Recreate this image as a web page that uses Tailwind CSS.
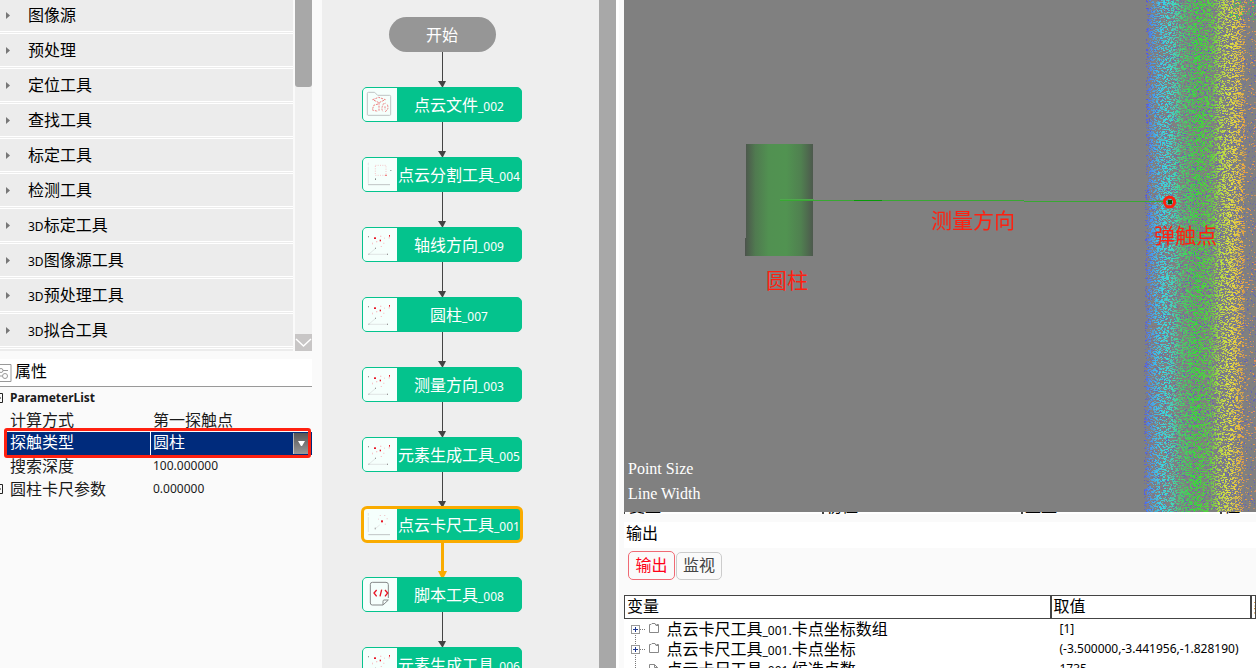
<!DOCTYPE html>
<html lang="zh-CN">
<head>
<meta charset="utf-8">
<title>点云测量</title>
<script src="https://cdn.jsdelivr.net/npm/@tailwindcss/browser@4"></script>
</head>
<body class="bg-[#fafafa] text-black font-['Noto_Sans','Noto_Sans_CJK_SC',sans-serif] text-base">
<svg class="hidden">
  <symbol id="cloud" viewBox="0 0 105 105">
    <path d="M20 82 41 64M22 82H78" stroke="#d5dada" stroke-width="2" fill="none"/>
    <g fill="#999"><rect x="18" y="27" width="3" height="4"/><rect x="39" y="62" width="3" height="4"/><rect x="75" y="80" width="3" height="4"/><rect x="19" y="80" width="3" height="3"/></g>
    <g fill="#f8c6ca"><rect x="54" y="26" width="4" height="4"/><rect x="66" y="32" width="3" height="3"/><rect x="42" y="42" width="4" height="4"/><rect x="30" y="47" width="3" height="5"/><rect x="64" y="47" width="3" height="4"/><rect x="56" y="57" width="4" height="3"/><rect x="80" y="30" width="3" height="5"/></g>
    <g fill="#e81626"><rect x="36" y="31" width="6" height="5"/><rect x="53" y="38" width="4" height="5"/><rect x="81" y="24" width="3" height="5"/></g>
  </symbol>
  <symbol id="file" viewBox="0 0 105 105">
    <path d="M16 85V19q0-3 3-3h19l9 9h36q3 0 3 3v54q0 3-3 3H18" fill="none" stroke="#bfc4c4" stroke-width="3"/>
    <g fill="none" stroke="#ee7f80" stroke-width="3" stroke-dasharray="6 3"><path d="M32 38l18-7 20 7-19 9zM51 47v25M48 51l-13 4-4 14 17 4"/><path d="M62 52l10-4M76 53q6 14-7 21M62 56q-5 10 1 18M69 58v10"/></g>
  </symbol>
  <symbol id="split" viewBox="0 0 105 105">
    <path d="M19 17v8M19 29v51" stroke="#d5dada" stroke-width="2"/><path d="M18 83H84" stroke="#bfc4c4" stroke-width="3"/>
    <path d="M40 25H72V55H40z" fill="none" stroke="#f5c6c9" stroke-width="3" stroke-dasharray="3 4"/>
    <g fill="#888"><rect x="39" y="64" width="3" height="5"/><rect x="85" y="39" width="3" height="3"/></g><path d="M69 55h6" stroke="#e88" stroke-width="4"/>
  </symbol>
  <symbol id="caliper" viewBox="0 0 105 105">
    <path d="M19 18v8M19 30v45" stroke="#d5dada" stroke-width="2"/><path d="M19 83H84" stroke="#bfc4c4" stroke-width="3"/>
    <rect x="57" y="40" width="6" height="6" fill="#e81626"/>
    <g fill="#f0cdd0"><rect x="53" y="24" width="4" height="3"/><rect x="66" y="24" width="4" height="3"/><rect x="74" y="33" width="3" height="4"/><rect x="48" y="35" width="3" height="3"/><rect x="68" y="50" width="4" height="3"/></g><rect x="38" y="62" width="4" height="5" fill="#aaa"/><path d="m41 64 12-10" stroke="#ddd" stroke-width="2"/>
  </symbol>
  <symbol id="script" viewBox="0 0 105 105">
    <path d="M79 63V23q0-7-7-7H31q-6 0-6 6v56q0 6 6 6h32l16-15H66q-3 0-3 4v11" fill="none" stroke="#858989" stroke-width="3"/>
    <path d="m44 39-8 9 8 10M69 39l8 9-8 10M59 38l-5 20" fill="none" stroke="#e81626" stroke-width="4"/>
  </symbol>
  <symbol id="arrow" viewBox="0 0 10 35"><path d="M5.500 0V30" stroke="#444" stroke-width="1"/><path d="M1 29H9L6 35H5z" fill="#444"/></symbol>
</svg>

<div class="flex h-screen overflow-hidden">
  <aside class="flex w-[312px] shrink-0 flex-col">
    <div class="flex h-[351px] overflow-hidden bg-[#fafafa]">
      <ul id="tools" class="-mt-px w-[293px] bg-[#ececec]"></ul>
      <div class="ml-[2px] flex w-[17px] flex-col justify-between bg-[#f0f0f0]">
        <div class="h-[87px] rounded-b-[3px] bg-[#a8a8a8]"></div>
        <button aria-label="向下滚动" class="flex h-[17px] w-[17px] items-center justify-center bg-[#c8c6c6]"><svg class="h-[17px] w-[17px]" viewBox="0 0 17 17"><path d="m1 5 7.500 7L16 5" fill="none" stroke="#fff" stroke-width="1.500"/></svg></button>
      </div>
    </div>
    <h2 class="mt-2 flex h-7 items-center gap-[3px] border-b border-[#999] bg-white">
      <svg class="h-5 w-3 shrink-0" viewBox="0 0 12 20"><path d="M0 1.500H11V18.500H0M0 7.500H8M0 13H2" fill="none" stroke="#999"/><circle cx="1" cy="7.500" r="2" fill="#fff" stroke="#999"/><circle cx="5" cy="13" r="2.500" fill="none" stroke="#999"/></svg>
      <span class="pb-1 leading-5">属性</span></h2>
    <div class="text-[#1a1a1a]">
      <div class="flex h-[22px] items-center"><svg class="mr-[7px] h-3 w-[3px]" viewBox="0 0 3 12"><path d="M0 1.500H2.500V10.500H0M0 6H1" fill="none" stroke="#222"/></svg><b class="text-xs">ParameterList</b></div>
      <div class="flex h-[23px] items-center pb-[2px] pl-[10px]"><span class="w-[143px]">计算方式</span><span>第一探触点</span></div>
      <div class="relative flex h-[23px] items-center bg-[#002b7c] pl-[10px] text-white">
        <label for="probe" class="flex h-full w-[141px] items-center border-r border-white pb-[3px]">探触类型</label>
        <select id="probe" class="h-full flex-1 appearance-none pb-[3px] pl-[2px] leading-5 outline-none"><option>圆柱</option></select>
        <span class="pointer-events-none absolute right-1 flex h-[21px] w-[15px] items-center justify-center border-l border-white/50 bg-linear-to-b from-[#555] to-[#999]"><svg class="h-[5px] w-[7px]" viewBox="0 0 7 5"><path d="M0 0H7L4 5H3z" fill="#fff"/></svg></span>
        <span class="pointer-events-none absolute -top-[4px] -bottom-[4px] left-0 w-1 bg-[#fafafa]"></span>
        <span class="pointer-events-none absolute -top-[4px] right-[1px] -bottom-[3px] left-1 rounded-[3px] border-[3px] border-[#ff2010]"></span>
      </div>
      <div class="flex h-[23px] items-center pb-[2px] pl-[10px]"><span class="w-[143px]">搜索深度</span><span class="pt-px text-xs">100.000000</span></div>
      <div class="flex h-[23px] items-center pb-[2px]"><svg class="mr-[7px] h-3 w-[3px]" viewBox="0 0 3 12"><path d="M0 1.500H2.500V10.500H0M0 6H1" fill="none" stroke="#222"/></svg><span class="w-[143px]">圆柱卡尺参数</span><span class="pt-px text-xs">0.000000</span></div>
    </div>
  </aside>

  <main class="ml-[3px] flex w-[304px] shrink-0 border-l-[7px] border-[#fafafa] bg-[#eee]">
    <section class="flex-1 overflow-hidden pt-[17px] pl-10">
      <div id="flow" class="flex w-40 flex-col items-center">
        <div class="flex h-[35px] w-[107px] shrink-0 items-center justify-center rounded-full bg-[#969696] text-white">开始</div>
      </div>
    </section>
    <div class="w-[17px] bg-[#a8a8a8]"></div>
    <div class="w-[3px] bg-white"></div>
  </main>

  <section class="ml-[5px] flex min-w-0 flex-1 flex-col">
    <div class="relative flex-1 overflow-hidden bg-[#808080]">
      <div class="absolute top-[144px] left-[122px] h-[112px] w-[67px] bg-[linear-gradient(to_right,#4c584c,#507a50_14%,#519151_34%,#519351_60%,#508050_82%,#4d594d)]"></div>
      <div class="absolute top-[238px] left-[121px] h-[18px] w-px bg-[#4c544c]"></div>
      <canvas id="points" width="114" height="512" class="absolute top-0 right-0"></canvas>
      <svg class="absolute top-[190px] left-0 h-6 w-[560px]" viewBox="0 0 560 24"><path d="M156 9.500H190" stroke="#4fa84c"/><path d="M156 10.500H400M400 11.500H542" fill="none" stroke="#38a832" stroke-width="1"/><path d="M230 10.500h28" stroke="#079a07"/><circle cx="545.500" cy="12" r="5" fill="none" stroke="#ff2010" stroke-width="3"/><path d="M544 10h4v4h-4z" fill="#0a5a10"/></svg>
      <span class="absolute top-[266px] left-[142px] text-[21px] leading-7 text-[#ff2010]">圆柱</span>
      <span class="absolute top-[206px] left-[307px] text-[21px] leading-7 text-[#ff2010]">测量方向</span>
      <span class="absolute top-[221px] left-[530px] text-[21px] leading-7 text-[#ff2010]">弹触点</span>
      <div class="absolute bottom-[6px] left-1 font-['Liberation_Serif',serif] text-base leading-[25px] text-white"><p>Point Size</p><p>Line Width</p></div>
    </div>
    <div class="flex h-[156px] flex-col">
      <div class="flex h-[2px] items-end overflow-hidden bg-white leading-4"><span class="w-[199px] border-l border-[#444] pl-1">变量</span><span class="w-[200px] border-l-2 border-[#444] pl-[2px]">初值</span><span class="w-[200px] border-l-2 border-[#444] pl-[2px]">重量</span><span class="border-l-2 border-[#444] pl-[2px]">初值</span></div>
      <h2 class="mt-2 h-[26px] bg-white pl-[2px] leading-[23px]">输出</h2>
      <div class="flex h-[47px] items-start gap-px pt-[3px] pl-1">
        <button class="h-[29px] w-[47px] rounded-[5px] border border-[#f06a74] pb-[2px] leading-6 text-[#ff0018]">输出</button>
        <button class="mt-px h-7 w-[46px] rounded-[5px] border border-[#ccc] pb-[2px] leading-6 text-[#444]">监视</button>
      </div>
      <div class="flex-1 overflow-hidden bg-white">
        <table class="w-full table-fixed border-collapse text-left">
          <colgroup><col><col class="w-[200px]"><col class="w-[5px]"></colgroup>
          <thead><tr class="h-[22px] border border-[#444] leading-5"><th class="border-r-2 border-[#444] p-0 pb-[2px] pl-[2px] font-normal leading-5">变量</th><th class="border-r-2 border-[#444] p-0 pb-[2px] pl-[2px] font-normal leading-5">取值</th><th class="overflow-hidden p-0 pb-[2px] pl-[2px] font-normal leading-5 whitespace-nowrap">类型</th></tr></thead>
          <tbody id="vars"></tbody>
        </table>
      </div>
    </div>
  </section>
</div>

<script>
// CJK is set at 16px, Latin letters and digits at 12px.
const mix = t => t.replace(/[A-Za-z0-9_.]+/g, m => `<span class="text-xs">${m}</span>`);

document.getElementById('tools').innerHTML = ['图像源','预处理','定位工具','查找工具','标定工具','检测工具','3D标定工具','3D图像源工具','3D预处理工具','3D拟合工具'].map(t =>
  `<li class="flex h-[35px] items-center border-b-[3px] border-double border-white bg-[#ececec] pl-[6px]"><svg class="mr-[18px] h-[7px] w-1" viewBox="0 0 4 7"><path d="M0 0 4 3.500 0 7z" fill="#777"/></svg><span>${mix(t)}</span></li>`).join('');

const nodes = [['file','点云文件_002'],['split','点云分割工具_004'],['cloud','轴线方向_009'],['cloud','圆柱_007'],['cloud','测量方向_003'],['cloud','元素生成工具_005'],['caliper','点云卡尺工具_001'],['script','脚本工具_008'],['cloud','元素生成工具_006']];
document.getElementById('flow').insertAdjacentHTML('beforeend', nodes.map(([icon, t], i) => {
  const link = i === 7
    ? '<svg class="h-[35px] w-[10px] shrink-0" viewBox="0 0 10 35"><path d="M5.500 0V31" stroke="#f9ab00" stroke-width="3"/><path d="M1 29H10L6.500 36H4.500z" fill="#f9ab00"/></svg>'
    : '<svg class="h-[35px] w-[10px] shrink-0"><use href="#arrow"/></svg>';
  const ring = i === 6 ? 'outline-[3px] -outline-offset-2 outline-[#f9ab00]' : '';
  return `${link}<div class="flex h-[35px] w-40 shrink-0 overflow-hidden rounded-[5px] border border-[#04c38d] bg-[#04c38d] text-white ${ring}"><svg class="h-[33px] w-[34px] shrink-0 bg-[#f5fffc]" viewBox="3 3 102 99"><use href="#${icon}" width="105" height="105"/></svg><span class="flex-1 text-center leading-[34px] whitespace-nowrap">${mix(t)}</span></div>`;
}).join(''));

const vars = [['点云卡尺工具_001.卡点坐标数组','[1]',1],['点云卡尺工具_001.卡点坐标','(-3.500000,-3.441956,-1.828190)',1],['点云卡尺工具_001.候选点数','1735',0]];
document.getElementById('vars').innerHTML = vars.map(([n, v, open], i) => {
  const line = `<path d="M10.500 ${i ? 0 : 14}V20" stroke="#777" stroke-dasharray="1 1"/>`;
  const art = open
    ? line + '<path d="M15 10.500H21" stroke="#777" stroke-dasharray="1 1"/><rect x="6.500" y="6.500" width="8" height="8" fill="#fff" stroke="#999"/><path d="M8 10.500h5M10.500 8v5" stroke="#203a90"/><path d="M26 5.500h-1.500v8h9v-8h-2M26 5.500l1-1h3l1 2h3" fill="none" stroke="#888"/>'
    : line + '<path d="M24.500 14V5.500h5l3 3V14M29.500 5.500v3h3" fill="none" stroke="#888"/>';
  return `<tr class="h-5"><td class="p-0"><div class="flex h-5 items-center"><button aria-label="展开" class="h-5 w-[42px]"><svg class="h-5 w-[42px]" viewBox="0 0 42 20">${art}</svg></button><span class="leading-5 whitespace-nowrap">${mix(n)}</span></div></td><td class="p-0 pl-[9px] text-xs leading-5 whitespace-nowrap">${v}</td><td></td></tr>`;
}).join('');

// Scanned surface: points coloured by height from blue to orange, sparse past the right edge.
const ctx = document.getElementById('points').getContext('2d');
let seed = 7;
const rnd = () => (seed = (seed * 1664525 + 1013904223) >>> 0) / 4294967296;
const stops = [[0,80,80,240],[4,70,140,245],[11,60,190,240],[20,50,228,230],[28,60,220,190],[36,70,210,110],[52,50,225,50],[66,90,215,60],[76,190,230,60],[86,235,230,60],[95,240,190,60],[99,240,160,60],[114,235,140,90]];
for (let y = 0; y < 512; y++) {
  const edge = 4 - y / 180;
  for (let x = 0; x < 114; x++) {
    const d = x - edge;
    if (d < 0) continue;
    let k = 1;
    while (k < stops.length - 1 && stops[k][0] < d) k++;
    const a = stops[k - 1], b = stops[k], f = Math.min(1, (d - a[0]) / (b[0] - a[0]));
    const density = d < 3 ? 0.2 : d < 95 ? 0.36 : d < 99 ? 0.28 : 0.05;
    const r = rnd();
    if (r < density) {
      const [cr, cg, cb] = [1, 2, 3].map(c => Math.round(a[c] + (b[c] - a[c]) * f));
      ctx.fillStyle = `rgba(${cr},${cg},${cb},${0.5 + rnd() * 0.5})`;
      ctx.fillRect(x, y, rnd() < 0.5 ? 2 : 1, 1);
    } else if (r < density + 0.09) {
      ctx.fillStyle = `rgba(85,85,210,${0.3 + rnd() * 0.5})`;
      ctx.fillRect(x, y, 1, 1);
    } else if (y < 20 && d > 84 && r < density + 0.25) {
      ctx.fillStyle = 'rgba(60,210,80,.8)';
      ctx.fillRect(x, y, 1, 1);
    }
  }
}
</script>
</body>
</html>
